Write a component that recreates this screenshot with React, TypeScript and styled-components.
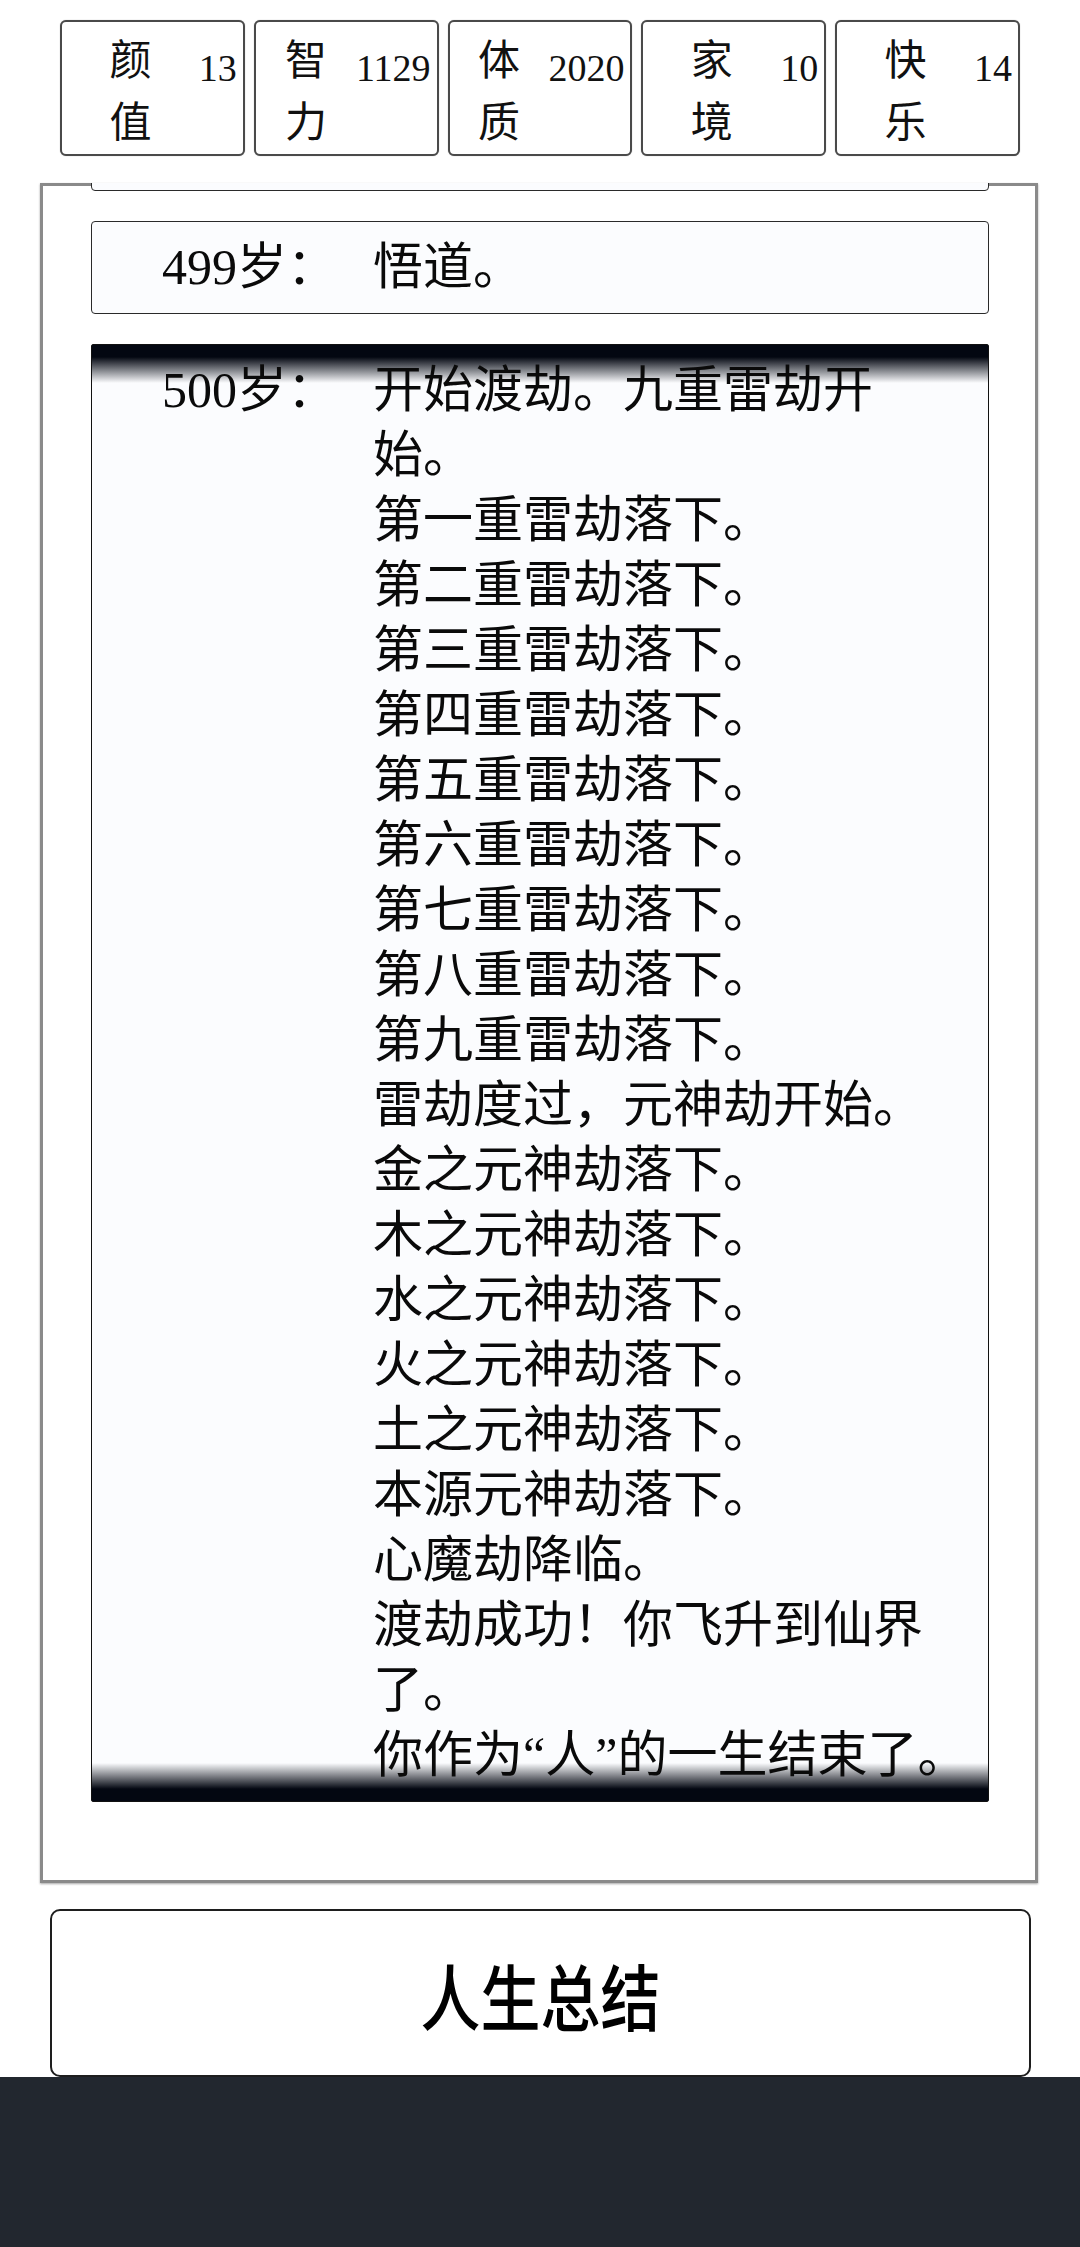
import React from "react";
import styled, { createGlobalStyle, css } from "styled-components";

const GlobalStyle = createGlobalStyle`
  html, body {
    margin: 0;
    padding: 0;
    background: #ffffff;
  }
  * {
    box-sizing: border-box;
  }
`;

const stats = [
  { name: "颜值", value: 13 },
  { name: "智力", value: 1129 },
  { name: "体质", value: 2020 },
  { name: "家境", value: 10 },
  { name: "快乐", value: 14 },
];

const entries = [
  { age: 499, lines: ["悟道。"] },
  {
    age: 500,
    current: true,
    lines: [
      "开始渡劫。九重雷劫开始。",
      "第一重雷劫落下。",
      "第二重雷劫落下。",
      "第三重雷劫落下。",
      "第四重雷劫落下。",
      "第五重雷劫落下。",
      "第六重雷劫落下。",
      "第七重雷劫落下。",
      "第八重雷劫落下。",
      "第九重雷劫落下。",
      "雷劫度过，元神劫开始。",
      "金之元神劫落下。",
      "木之元神劫落下。",
      "水之元神劫落下。",
      "火之元神劫落下。",
      "土之元神劫落下。",
      "本源元神劫落下。",
      "心魔劫降临。",
      "渡劫成功！你飞升到仙界了。",
      "你作为“人”的一生结束了。",
    ],
  },
];

const Page = styled.div`
  min-height: 100vh;
  display: flex;
  flex-direction: column;
`;

const StatsRow = styled.div`
  display: flex;
  gap: 9px;
  padding: 20px 60px 0;
`;

const StatBox = styled.div`
  flex: 1;
  height: 136px;
  display: flex;
  align-items: center;
  border: 2px solid #4a4a4a;
  border-radius: 6px;
  background: #ffffff;
  box-shadow: 0 0 1px rgba(0, 0, 0, 0.4);
`;

const StatName = styled.div`
  flex: 1;
  display: flex;
  flex-direction: column;
  align-items: center;
  font-family: "Noto Sans CJK SC", sans-serif;
  font-size: 42px;
  line-height: 62px;
  color: #111;
`;

const StatChar = styled.span`
  display: block;
`;

const StatValue = styled.div`
  align-self: flex-start;
  padding: 24px 6px 0 0;
  font-family: "Liberation Serif", serif;
  font-size: 38px;
  line-height: normal;
  color: #111;
`;

const Panel = styled.div`
  height: 1700px;
  margin: 27px 42px 0 40px;
  border: 3px solid #8a8a8a;
  box-shadow: 0 1px 2px rgba(0, 0, 0, 0.35);
  background: #ffffff;
`;

const Timeline = styled.div`
  margin-top: -3px;
  height: calc(100% + 3px);
  overflow: hidden;
  display: flex;
  flex-direction: column;
  justify-content: flex-end;
  gap: 30px;
  padding: 0 46px 78px 48px;
`;

const Entry = styled.div<{ $current?: boolean }>`
  flex-shrink: 0;
  display: grid;
  grid-template-columns: 211px 11.95em;
  padding: 13px 0 13px 70px;
  border: 1px solid #2a2a2a;
  border-radius: 4px;
  background: #fbfcfe;
  font-family: "Liberation Serif", "Noto Sans CJK SC", serif;
  font-size: 50px;
  line-height: 65px;
  color: #0a0a0a;
  text-spacing-trim: space-all;

  ${(p) =>
    p.$current &&
    css`
      border-radius: 2px;
      border-color: #111;
      background: linear-gradient(
          180deg,
          #030711 0px,
          #030711 12px,
          rgba(251, 252, 254, 0) 38px,
          rgba(251, 252, 254, 0) calc(100% - 38px),
          #030711 calc(100% - 12px),
          #030711 100%
        ),
        #fbfcfe;
    `}
`;

/* earlier entry scrolled out of view: only its bottom edge shows */
const ScrolledEntry = styled(Entry)`
  height: 93px;
`;

const Age = styled.div`
  white-space: nowrap;
`;

const Events = styled.div`
  display: flex;
  flex-direction: column;
`;

const EventLine = styled.div``;

const SummaryButton = styled.button`
  height: 168px;
  margin: 26px 49px 0 50px;
  border: 2px solid #1e1e1e;
  border-radius: 10px;
  background: #ffffff;
  display: flex;
  align-items: center;
  justify-content: center;
  font-family: "Noto Sans CJK SC", sans-serif;
  font-size: 60px;
  font-weight: 500;
  color: #000;
  padding: 0;
  cursor: pointer;
`;

const ButtonLabel = styled.span`
  display: inline-block;
  transform: scaleY(1.2);
`;

const BottomBar = styled.div`
  flex: 1;
  background: #22272f;
`;

export default function App() {
  return (
    <>
      <GlobalStyle />
      <Page>
        <StatsRow>
          {stats.map((s) => (
            <StatBox key={s.name}>
              <StatName>
                {Array.from(s.name).map((ch, i) => (
                  <StatChar key={i}>{ch}</StatChar>
                ))}
              </StatName>
              <StatValue>{s.value}</StatValue>
            </StatBox>
          ))}
        </StatsRow>

        <Panel>
          <Timeline>
            <ScrolledEntry />
            {entries.map((e) => (
              <Entry key={e.age} $current={e.current}>
                <Age>{e.age}岁：</Age>
                <Events>
                  {e.lines.map((line, i) => (
                    <EventLine key={i}>{line}</EventLine>
                  ))}
                </Events>
              </Entry>
            ))}
          </Timeline>
        </Panel>

        <SummaryButton>
          <ButtonLabel>人生总结</ButtonLabel>
        </SummaryButton>

        <BottomBar />
      </Page>
    </>
  );
}
